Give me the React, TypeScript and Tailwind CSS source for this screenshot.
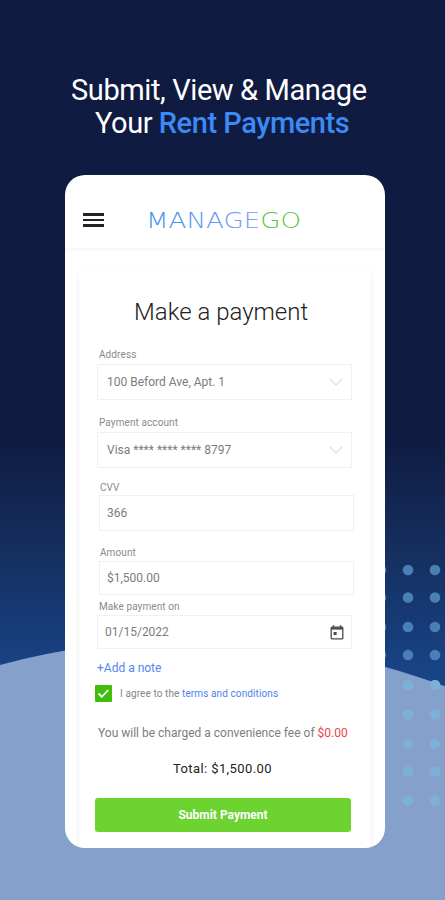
import type { ReactNode } from "react";

function Background() {
  const rows = [570, 597.5, 627, 655, 685, 714.5, 744, 771.5, 801];
  return (
    <svg className="absolute inset-0" width="445" height="900" viewBox="0 0 445 900">
      <defs>
        <linearGradient id="sky" x1="0" y1="0" x2="0" y2="1">
          <stop offset="0" stopColor="#0f1b40" />
          <stop offset="0.49" stopColor="#0f1c42" />
          <stop offset="0.62" stopColor="#153061" />
          <stop offset="0.75" stopColor="#184487" />
        </linearGradient>
      </defs>
      <rect width="445" height="900" fill="url(#sky)" />
      <circle cx="189" cy="1370" r="730" fill="#84a0cb" />
      {rows.map((y) => (
        <g key={y} fill={y < 670 ? "#4a7fb5" : "#7db0d9"}>
          {y < 670 && <circle cx="381" cy={y} r="5.3" />}
          <circle cx="408" cy={y} r="5.3" />
          <circle cx="435" cy={y} r="5.3" />
        </g>
      ))}
    </svg>
  );
}

function Chevron() {
  return (
    <svg width="14" height="8" viewBox="0 0 14 8" fill="none" stroke="#dcdcdc" strokeWidth="1.1">
      <path d="M1 1l6 6 6-6" />
    </svg>
  );
}

function CalendarIcon() {
  return (
    <svg width="14" height="15" viewBox="0 0 14 15" fill="none" stroke="#4a4a4a">
      <rect x="1.2" y="2.2" width="11.6" height="11.6" rx="0.8" strokeWidth="1.3" />
      <path d="M1 3.5h12" strokeWidth="2.2" />
      <path d="M3.5 0.3v3M10.5 0.3v3" strokeWidth="1.4" />
      <rect x="3.6" y="7" width="3" height="3" fill="#4a4a4a" stroke="none" />
    </svg>
  );
}

function Field({ label, className, labelClass, boxClass, value, icon }: {
  label: string;
  className: string;
  labelClass: string;
  boxClass: string;
  value: string;
  icon?: ReactNode;
}) {
  return (
    <div className={`flex flex-col ${className}`}>
      <span className={`whitespace-nowrap text-[10px] leading-[12px] tracking-[0.1px] text-[#8a8a8a] ${labelClass}`}>{label}</span>
      <div className={`flex w-[255px] items-center justify-between border border-[#f0f0f0] ${boxClass}`}>
        <span className="whitespace-nowrap text-[12px] leading-[14px] text-[#7c7c7c]">{value}</span>
        {icon}
      </div>
    </div>
  );
}

export default function App() {
  return (
    <div className="relative h-[900px] w-[445px] overflow-hidden font-['Roboto',sans-serif]">
      <Background />
      <main className="relative flex h-full flex-col pl-[65px]">
        <h1 className="flex h-[175px] flex-col pt-[74px] text-[29px] leading-[33px] text-white">
          <span className="ml-[6px] whitespace-nowrap tracking-[-0.4px]">Submit, View &amp; Manage</span>
          <span className="ml-[30px] whitespace-nowrap tracking-[-0.45px]">
            Your <b className="font-medium text-[#3b8af5]">Rent Payments</b>
          </span>
        </h1>

        <section className="flex h-[673px] w-[320px] flex-col overflow-hidden rounded-[20px] bg-white">
          <header className="flex h-[74px] shrink-0 items-start border-b border-[#fafafa] pl-[18px] pt-[36px] shadow-[0_1px_3px_rgba(0,0,0,0.05)]">
            <div className="mt-[2px] flex w-[21px] flex-col gap-[3px]">
              <i className="h-[2.5px] bg-[#222222]" />
              <i className="h-[2.5px] bg-[#222222]" />
              <i className="h-[2.5px] bg-[#222222]" />
            </div>
            <svg className="-mt-[6px] ml-[39px]" width="170" height="32" viewBox="0 0 170 32">
              <defs>
                <linearGradient id="brand" gradientUnits="userSpaceOnUse" x1="4" y1="0" x2="120" y2="0">
                  <stop offset="0" stopColor="#3f8eea" />
                  <stop offset="1" stopColor="#7a9ef5" />
                </linearGradient>
              </defs>
              <text x="3" y="22.5" fontFamily="'DejaVu Sans Light', 'DejaVu Sans', sans-serif" fontWeight="200" fontSize="21" textLength="155" lengthAdjust="spacingAndGlyphs" fill="url(#brand)">
                MANAGE<tspan fill="#5bc63b">GO</tspan>
              </text>
            </svg>
          </header>

          <div className="ml-[14px] mt-[21px] flex h-[600px] w-[292px] shrink-0 flex-col pl-[16px] shadow-[0_2px_5px_rgba(0,0,0,0.08)]">
            <h2 className="ml-[39px] mt-[27px] whitespace-nowrap text-[24px] font-light leading-[30px] text-[#222222]">Make a payment</h2>

            <Field label="Address" value="100 Beford Ave, Apt. 1" className="mt-[22px] ml-[2px]" labelClass="ml-[2px]" boxClass="mt-[3px] h-[36px] pl-[9px] pr-[8px]" icon={<Chevron />} />
            <Field label="Payment account" value="Visa **** **** **** 8797" className="mt-[17px] ml-[2px]" labelClass="ml-[2px]" boxClass="mt-[3px] h-[36px] pl-[9px] pr-[8px]" icon={<Chevron />} />
            <Field label="CVV" value="366" className="mt-[14px] ml-[4px]" labelClass="ml-[1px]" boxClass="mt-[1px] h-[36px] pl-[7px]" />
            <Field label="Amount" value="$1,500.00" className="mt-[16px] ml-[4px]" labelClass="ml-[1px]" boxClass="mt-[2px] h-[34px] pl-[7px]" />
            <Field label="Make payment on" value="01/15/2022" className="mt-[6px] ml-[2px]" labelClass="ml-[2px]" boxClass="mt-[2px] h-[34px] pl-[7px] pr-[7px]" icon={<CalendarIcon />} />

            <a className="ml-[2px] mt-[12px] text-[12px] leading-[14px] text-[#5286ee]">+Add a note</a>
            <div className="mt-[10px] flex h-[17px] items-center">
              <span className="flex h-[17px] w-[17px] items-center justify-center rounded-[1px] bg-[#43bd0b]">
                <svg width="13" height="11" viewBox="0 0 13 11" fill="none" stroke="white" strokeWidth="1.8">
                  <path d="M1.5 5.5l3.3 3.3L11.3 2" />
                </svg>
              </span>
              <span className="ml-[8px] whitespace-nowrap text-[10px] tracking-[0.1px] text-[#858585]">
                I agree to the <span className="text-[#4d82ee]">terms and conditions</span>
              </span>
            </div>
            <p className="ml-[3px] mt-[24px] whitespace-nowrap text-[12px] leading-[14px] text-[#7d7d7d]">
              You will be charged a convenience fee of <span className="text-[#ee4444]">$0.00</span>
            </p>
            <p className="ml-[78px] mt-[21px] whitespace-nowrap text-[13px] leading-[16px] tracking-[0.4px] text-[#222222]">Total: $1,500.00</p>
            <button className="mt-[21px] h-[34px] w-[256px] shrink-0 rounded-[3px] bg-[#6cd331] text-[12px] font-bold leading-[14px] text-white">
              Submit Payment
            </button>
          </div>
        </section>
      </main>
    </div>
  );
}
